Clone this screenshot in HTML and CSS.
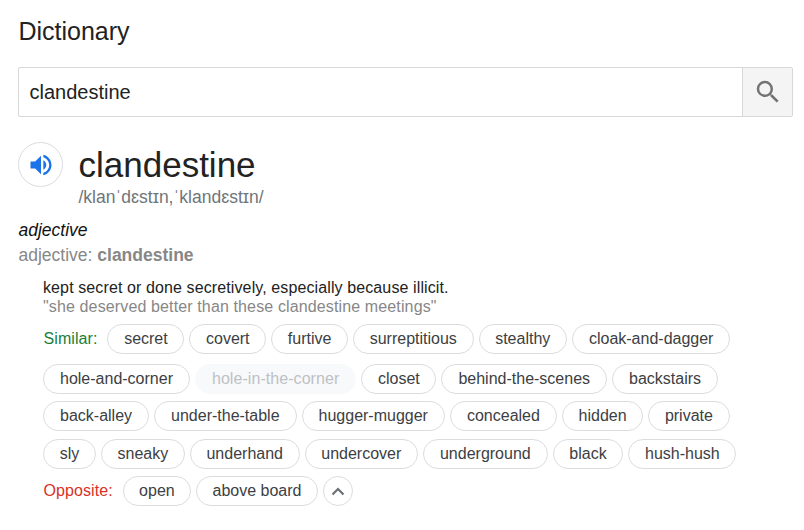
FILE: index.html
```html
<!DOCTYPE html>
<html lang="en">
<head>
<meta charset="utf-8">
<title>Dictionary</title>
<link rel="stylesheet" href="styles.css">
</head>
<body>
<main class="dictionary">
  <h1 class="title">Dictionary</h1>
  <div class="search">
    <div class="search-text">clandestine</div>
    <div class="search-button">
      <svg width="30" height="30" viewBox="0 0 24 24"><path fill="#737373" d="M15.500 14h-.79l-.28-.27A6.471 6.471 0 0 0 16 9.500 6.500 6.500 0 1 0 9.500 16c1.610 0 3.090-.59 4.230-1.570l.27.28v.79l5 4.990L20.490 19l-4.990-5zm-6 0C7.010 14 5 11.990 5 9.500S7.010 5 9.500 5 14 7.010 14 9.500 11.990 14 9.500 14z"/></svg>
    </div>
  </div>
  <header class="entry">
    <div class="speaker">
      <svg width="28" height="28" viewBox="0 0 24 24"><path fill="#1a73e8" d="M3 9v6h4l5 5V4L7 9H3zm13.500 3c0-1.770-1.020-3.290-2.500-4.030v8.050c1.480-.73 2.500-2.250 2.500-4.020zM14 3.230v2.060c2.890.86 5 3.540 5 6.710s-2.110 5.850-5 6.710v2.060c4.010-.91 7-4.490 7-8.770s-2.990-7.860-7-8.770z"/></svg>
    </div>
    <div>
      <h2 class="word">clandestine</h2>
      <div class="phonetic">/klanˈdɛstɪn,ˈklandɛstɪn/</div>
    </div>
  </header>
  <div class="pos">adjective</div>
  <div class="form">adjective: <b>clandestine</b></div>
  <section class="sense">
    <p class="definition">kept secret or done secretively, especially because illicit.</p>
    <p class="example">"she deserved better than these clandestine meetings"</p>
    <div class="row row-first"><span class="label similar">Similar:</span><span class="chip">secret</span><span class="chip">covert</span><span class="chip">furtive</span><span class="chip">surreptitious</span><span class="chip">stealthy</span><span class="chip wide">cloak-and-dagger</span></div>
    <div class="row"><span class="chip wide">hole-and-corner</span><span class="chip wide muted">hole-in-the-corner</span><span class="chip">closet</span><span class="chip wide">behind-the-scenes</span><span class="chip wide">backstairs</span></div>
    <div class="row row-third"><span class="chip wide">back-alley</span><span class="chip wide">under-the-table</span><span class="chip wide">hugger-mugger</span><span class="chip wide">concealed</span><span class="chip">hidden</span><span class="chip">private</span></div>
    <div class="row"><span class="chip">sly</span><span class="chip">sneaky</span><span class="chip">underhand</span><span class="chip">undercover</span><span class="chip wide">underground</span><span class="chip">black</span><span class="chip">hush-hush</span></div>
    <div class="row row-opposite"><span class="label opposite">Opposite:</span><span class="chip">open</span><span class="chip">above board</span><span class="chip collapse"><svg width="14" height="9" viewBox="0 0 14 9"><path fill="none" stroke="#6b7074" stroke-width="2.200" d="M1.500 7.500 7 2l5.500 5.500"/></svg></span></div>
  </section>
</main>
</body>
</html>
```
FILE: styles.css
```css
* { box-sizing: border-box; }
body {
  margin: 0;
  background: #fff;
  color: #222;
  font: 16px/19px "Liberation Sans", Arial, sans-serif;
}
h1, h2, p { margin: 0; font-weight: 400; }
.dictionary { padding: 16px 11px 0 18px; }
.title { padding-left: 0.4px; font-size: 25px; line-height: 31px; }
.search {
  display: flex;
  height: 50px;
  margin-top: 20px;
  border: 1px solid #d8d8d8;
  border-radius: 2px;
}
.search-text { flex: 1; padding-left: 10.500px; font-size: 20px; line-height: 48px; }
.search-button {
  display: flex;
  align-items: center;
  justify-content: center;
  width: 50px;
  border-left: 1px solid #d8d8d8;
  background: #f4f4f4;
}
.entry { display: flex; gap: 15.500px; margin-top: 25px; }
.speaker {
  display: flex;
  align-items: center;
  justify-content: center;
  width: 45px;
  height: 45px;
  border: 1px solid #dadce0;
  border-radius: 50%;
}
.word { font-size: 35px; line-height: 45px; }
.phonetic { color: #70757a; font-size: 17.500px; line-height: 20px; }
.pos { margin-top: 12px; padding-left: 0.5px; color: #111; font-size: 17.500px; font-style: italic; line-height: 22px; }
.form { margin-top: 3px; padding-left: 0.5px; color: #878787; font-size: 17.500px; line-height: 22px; }
.sense { margin: 12px 0 0 25px; }
.definition { letter-spacing: 0.11px; }
.example { color: #878787; letter-spacing: 0.13px; }
.row { display: flex; gap: 5px; height: 30px; margin-bottom: 7px; white-space: nowrap; }
.row-first { margin: 8px 0 10px; }
.row-third { margin-bottom: 8px; }
.label { margin-right: 5px; padding-left: 0.5px; letter-spacing: 0.08px; line-height: 30px; }
.similar { color: #188038; }
.opposite { margin-right: 5px; color: #d93025; }
.chip {
  height: 30px;
  padding: 0 15.650px;
  border: 1px solid #dadce0;
  border-radius: 15px;
  color: #3c4043;
  line-height: 28px;
}
.wide { padding: 0 16px; }
.row-opposite .chip { padding: 0 15.400px; }
.muted { border-color: #f8f9fa; background: #f8f9fa; color: #bdc1c6; letter-spacing: 0.06px; }
.row-opposite .collapse {
  display: flex;
  align-items: center;
  justify-content: center;
  width: 30px;
  padding: 0;
}
```
